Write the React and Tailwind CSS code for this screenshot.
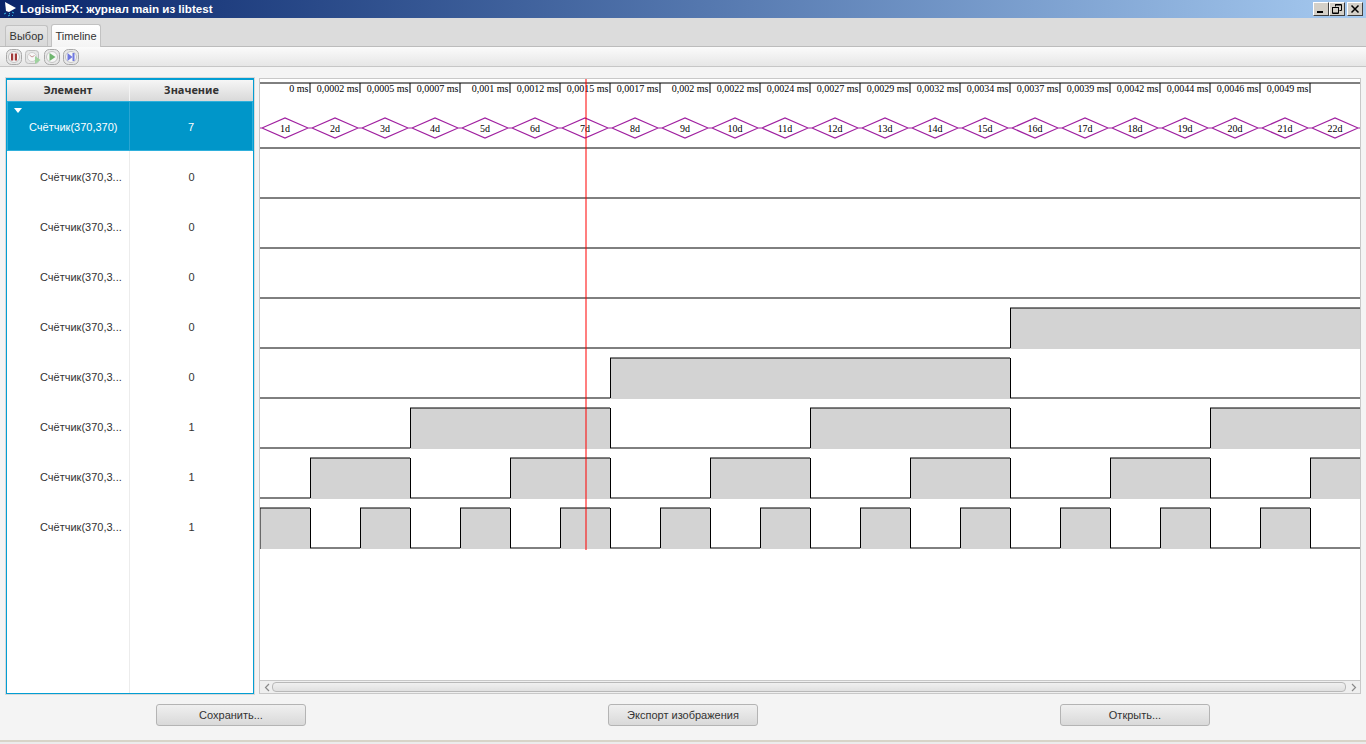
import React from 'react';

const FONT = "font-['Liberation_Sans',sans-serif]";
const SERIF = '"Liberation Serif", serif';

const TIMES = [
  '0 ms', '0,0002 ms', '0,0005 ms', '0,0007 ms', '0,001 ms', '0,0012 ms', '0,0015 ms',
  '0,0017 ms', '0,002 ms', '0,0022 ms', '0,0024 ms', '0,0027 ms', '0,0029 ms', '0,0032 ms',
  '0,0034 ms', '0,0037 ms', '0,0039 ms', '0,0042 ms', '0,0044 ms', '0,0046 ms', '0,0049 ms',
];

const STEP = 50;
const LEFT = 260;
const RIGHT = 1360;
const STEPS = 22;
const SIGNALS = [7, 6, 5, 4, 3, 2, 1, 0]; // counter bits, top row first

const TableRow = ({ bit }) => (
  <div className="flex h-[50px] text-[11px] text-[#333]">
    <div className="flex w-[123px] items-center truncate border-r border-[#ececec] pl-[33px] pt-[2px]">Счётчик(370,3...</div>
    <div className="flex flex-1 items-center justify-center pt-[2px]">{bit}</div>
  </div>
);

const edges = (bit) => {
  const xs = [];
  for (let k = 1; k < STEPS; k++) {
    if (((k >> bit) & 1) !== (((k + 1) >> bit) & 1)) xs.push(LEFT + k * STEP);
  }
  return xs;
};

const Wave = ({ bit, row }) => {
  const low = 198 + row * 50;
  const high = low - 40;
  const segments = Array.from({ length: STEPS }, (_, i) => ({
    x: LEFT + i * STEP,
    on: ((i + 1) >> bit) & 1,
  }));
  return (
    <g>
      {segments.filter((s) => s.on).map((s) => (
        <rect key={s.x} x={s.x} y={high} width={STEP} height={41} fill="#d3d3d3" />
      ))}
      {segments.map((s) => (
        <line key={s.x} x1={s.x} x2={s.x + STEP} y1={s.on ? high : low} y2={s.on ? high : low} stroke="#000" strokeWidth="1" />
      ))}
      {edges(bit).map((x) => (
        <line key={x} x1={x + 0.5} x2={x + 0.5} y1={high} y2={low} stroke="#000" strokeWidth="1" />
      ))}
    </g>
  );
};

const Timeline = () => (
  <svg className="block h-[601px] w-[1100px] shrink-0" viewBox="260 79 1100 601">
    <line x1={LEFT} x2={RIGHT} y1="83" y2="83" stroke="#000" strokeWidth="1" />
    {TIMES.map((t, i) => {
      const x = LEFT + (i + 1) * STEP;
      return (
        <g key={t}>
          <line x1={x} x2={x} y1="83" y2="93" stroke="#000" strokeWidth="1" />
          <text x={x - 1.5} y="92" textAnchor="end" fontSize="10" fontFamily={SERIF} fill="#000">{t}</text>
        </g>
      );
    })}
    {Array.from({ length: STEPS }, (_, i) => {
      const x = LEFT + i * STEP;
      return (
        <g key={i}>
          <path
            d={`M${x} 128 L${x + 2} 128 L${x + 25} 118 L${x + 48} 128 L${x + 50} 128 L${x + 48} 128 L${x + 25} 138 L${x + 2} 128`}
            fill="none"
            stroke="#a020a0"
            strokeWidth="1.2"
          />
          <text x={x + 25} y="132" textAnchor="middle" fontSize="10" fontFamily={SERIF} fill="#000">{i + 1}d</text>
        </g>
      );
    })}
    <line x1={LEFT} x2={RIGHT} y1="148" y2="148" stroke="#000" strokeWidth="1" />
    {SIGNALS.map((bit, row) => <Wave key={bit} bit={bit} row={row} />)}
    <line x1="260" x2="260" y1="508" y2="549" stroke="#000" strokeWidth="1" />
    <line x1="586" x2="586" y1="79" y2="550" stroke="#ff0000" strokeOpacity="0.5" strokeWidth="2" />
  </svg>
);

const ToolIcon = ({ children }) => (
  <svg width="16" height="16" viewBox="0 0 16 16" className="block">
    <rect x="0.5" y="0.5" width="15" height="15" rx="5" fill="#e8e8e8" stroke="#a8a8a8" />
    <circle cx="8" cy="8" r="5.5" fill="#f6f6f6" stroke="#c4c4c4" />
    {children}
  </svg>
);

const Toolbar = () => (
  <div className="flex h-[20px] items-center gap-[3px] border-b border-[#c6c6c6] bg-gradient-to-b from-[#fbfbfb] to-[#e6e6e6] pl-[6px]">
    <ToolIcon>
      <rect x="5" y="4.5" width="2.2" height="7" fill="#a33a3a" />
      <rect x="8.8" y="4.5" width="2.2" height="7" fill="#a33a3a" />
    </ToolIcon>
    <svg width="16" height="16" viewBox="0 0 16 16" className="block">
      <rect x="0.5" y="1.5" width="13" height="13" rx="3" fill="#e6e6e6" stroke="#bdbdbd" />
      <circle cx="7" cy="8" r="4.5" fill="#f8f8f8" stroke="#cfcfcf" />
      <path d="M4.5 6 L7 8 L9.5 6.5" fill="none" stroke="#c79a9a" />
      <path d="M10 7 L15.5 11 L10 15 Z" fill="#9ed29e" />
    </svg>
    <ToolIcon>
      <path d="M5.5 4 L11.5 8 L5.5 12 Z" fill="#6fb56f" />
    </ToolIcon>
    <ToolIcon>
      <path d="M4.5 4 L9.5 8 L4.5 12 Z" fill="#6f78e0" />
      <rect x="9.5" y="4" width="2" height="8" fill="#6f78e0" />
    </ToolIcon>
  </div>
);

const WinButton = ({ children, className = '' }) => (
  <div className={`flex h-[14px] w-[16px] items-center justify-center border border-b-[#404040] border-l-white border-r-[#404040] border-t-white bg-[#d4d0c8] ${className}`}>
    {children}
  </div>
);

const TitleBar = () => (
  <div className="flex h-[18px] items-center bg-gradient-to-r from-[#0a246a] to-[#a6caf0] pl-[3px] pr-[3px]">
    <svg width="15" height="16" viewBox="0 0 15 16" className="mr-[2px] block">
      <path d="M2 1 L13 7 L6 11 L3 10 Z" fill="#fff" />
      <path d="M1 13 L3 12 M6 12 L7 13 M9 11 L11 12 M5 15 L7 14 M9 14 L10 15" stroke="#35b5e5" strokeWidth="1" />
    </svg>
    <span className="text-[11.6px] font-bold text-white">LogisimFX: журнал main из libtest</span>
    <div className="ml-auto flex">
      <WinButton>
        <div className="mt-[6px] mr-[2px] h-[2px] w-[6px] bg-black" />
      </WinButton>
      <WinButton>
        <svg width="10" height="10" viewBox="0 0 10 10">
          <path d="M3.5 2.5 V0.5 H9.5 V6.5 H7.5 M3 1 H9 M1 3.5 H7 M0.5 3 V9.5 H6.5 V3 M1 9 H6" fill="none" stroke="#000" />
        </svg>
      </WinButton>
      <WinButton className="ml-[2px]">
        <svg width="10" height="10" viewBox="0 0 10 10">
          <path d="M1.5 1.5 L8.5 8.5 M8.5 1.5 L1.5 8.5" stroke="#000" strokeWidth="1.5" />
        </svg>
      </WinButton>
    </div>
  </div>
);

const FooterButton = ({ label }) => (
  <div className="flex justify-center">
    <button className="h-[22px] w-[150px] rounded-[3px] border border-[#b4b4b4] bg-gradient-to-b from-[#f0f0f0] to-[#d9d9d9] text-[11px] text-[#333]">
      {label}
    </button>
  </div>
);

export default function App() {
  return (
    <div className={`flex h-[744px] w-full flex-col overflow-hidden bg-[#f4f4f4] ${FONT}`}>
      <TitleBar />

      <div className="flex h-[29px] items-end gap-[3px] border-b border-[#bcbcbc] bg-[#dcdcdc] pl-[5px] text-[11px] text-[#333]">
        <div className="flex h-[21px] w-[43px] items-center justify-center rounded-t-[3px] border border-b-0 border-[#c2c2c2] bg-gradient-to-b from-[#e6e6e6] to-[#d8d8d8]">Выбор</div>
        <div className="-mb-px flex h-[23px] w-[50px] items-center justify-center rounded-t-[3px] border border-b-0 border-[#c2c2c2] bg-gradient-to-b from-[#ffffff] to-[#f4f4f4]">Timeline</div>
      </div>

      <Toolbar />

      <div className="mt-[11px] flex h-[616px] pl-[6px] pr-[5px]">
        <div className="flex w-[248px] flex-col border border-t-2 border-[#039ed3] bg-white shadow-[0_0_0_1px_#d8d8d8]">
          <div className="flex h-[21px] bg-gradient-to-b from-[#f6f6f6] to-[#d9d9d9] font-['Noto_Sans',sans-serif] text-[11px] font-bold text-[#333]">
            <div className="flex w-[123px] items-center justify-center border-r border-[#f4f4f4]">Элемент</div>
            <div className="flex flex-1 items-center justify-center">Значение</div>
          </div>
          <div className="relative flex h-[50px] border border-[#2fb0dc] bg-[#0096c9] text-[11px] text-white">
            <span className="absolute left-[6px] top-[6px] h-0 w-0 border-x-[4px] border-t-[5px] border-x-transparent border-t-white" />
            <div className="flex w-[122px] items-center border-r border-[#2aa5d2] pl-[21px] pt-[2px]">Счётчик(370,370)</div>
            <div className="flex flex-1 items-center justify-center pt-[2px]">7</div>
          </div>
          {SIGNALS.map((bit) => <TableRow key={bit} bit={(7 >> bit) & 1} />)}
          <div className="flex flex-1">
            <div className="w-[123px] border-r border-[#ececec]" />
          </div>
        </div>

        <div className="ml-[5px] flex flex-1 flex-col border border-[#c8c8c8] bg-white">
          <Timeline />
          <div className="flex h-[13px] items-center border-t border-[#c8c8c8] bg-[#efefef] px-[2px]">
            <svg width="9" height="9" viewBox="0 0 9 9" className="ml-[1px]">
              <path d="M6 1 L2.5 4.5 L6 8" fill="none" stroke="#8a8a8a" strokeWidth="1.2" />
            </svg>
            <div className="h-[10px] flex-1 rounded-[4px] border border-[#b8b8b8] bg-gradient-to-b from-[#f0f0f0] to-[#e0e0e0]" />
            <svg width="9" height="9" viewBox="0 0 9 9" className="ml-[3px]">
              <path d="M3 1 L6.5 4.5 L3 8" fill="none" stroke="#8a8a8a" strokeWidth="1.2" />
            </svg>
          </div>
        </div>
      </div>

      <div className="mt-[10px] grid grid-cols-3 px-[5px]">
        <FooterButton label="Сохранить..." />
        <FooterButton label="Экспорт изображения" />
        <FooterButton label="Открыть..." />
      </div>

      <div className="mt-[14px] h-[2px] bg-[#d8d4c8]" />
      <div className="flex-1 bg-[#ececec]" />
    </div>
  );
}
